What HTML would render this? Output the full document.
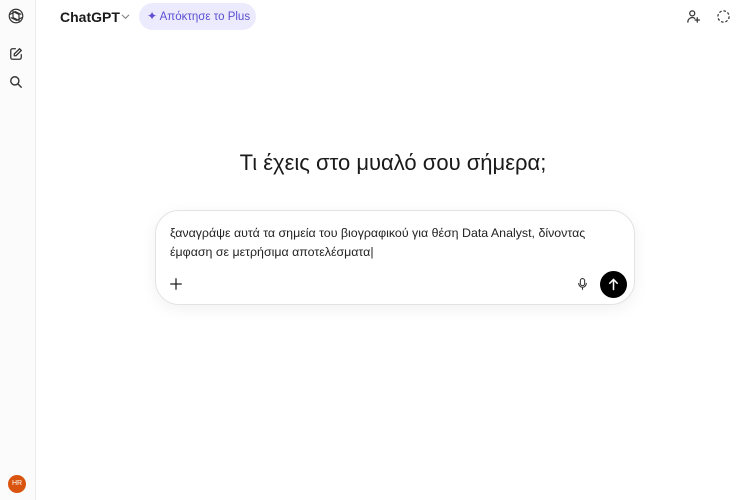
<!DOCTYPE html>
<html><head><meta charset="utf-8"><style>
*{margin:0;padding:0;box-sizing:border-box}
body{width:750px;height:500px;background:#fff;font-family:"Liberation Sans","DejaVu Sans",sans-serif;position:relative;overflow:hidden;color:#0d0d0d}
.side{position:absolute;left:0;top:0;width:36px;height:500px;background:#fbfbfb;border-right:1px solid #ececec}
.abs{position:absolute}
</style></head><body>
<div class="side">
<svg class="abs" style="left:7px;top:7px" width="18" height="18" viewBox="0 0 24 24" fill="none" stroke="#333" stroke-width="1.6"><circle cx="12" cy="12" r="9"/><path d="M8 5v9l6 3M16 19v-9l-6-3M4 10l7-4 8 4M20 14l-7 4-8-4"/></svg>
<svg class="abs" style="left:9px;top:47px" width="14" height="14" viewBox="0 0 24 24" fill="none" stroke="#333" stroke-width="2.2" stroke-linecap="round"><path d="M11 3H6a3 3 0 0 0-3 3v12a3 3 0 0 0 3 3h12a3 3 0 0 0 3-3v-5"/><path d="M18 3l3 3-9 9H9v-3z"/></svg>
<svg class="abs" style="left:9px;top:75px" width="14" height="14" viewBox="0 0 24 24" fill="none" stroke="#333" stroke-width="2.4" stroke-linecap="round"><circle cx="10" cy="10" r="7"/><path d="M15.5 15.5L21 21"/></svg>
<div class="abs" style="left:8px;top:475px;width:18px;height:18px;border-radius:50%;background:#d9540e;color:#fff;font-size:7px;line-height:18px;text-align:center">HR</div>
</div>
<div class="abs" style="left:60px;top:9px;font-size:14px;font-weight:bold;color:#1a1a1a">ChatGPT</div>
<svg class="abs" style="left:121px;top:13px" width="9" height="7" viewBox="0 0 10 7" fill="none" stroke="#888" stroke-width="1.2"><path d="M1 1.5l4 4 4-4"/></svg>
<div class="abs" style="left:139px;top:3px;width:117px;height:27px;border-radius:14px;background:#ecebfd;color:#5b4fd0;font-size:11.5px;line-height:27px;padding-left:8px"><span style="font-size:12px">&#10022;</span> Απόκτησε το Plus</div>
<svg class="abs" style="left:686px;top:9px" width="15" height="15" viewBox="0 0 24 24" fill="none" stroke="#333" stroke-width="2" stroke-linecap="round"><circle cx="10" cy="7" r="4"/><path d="M3 21a7 7 0 0 1 11-6M18 14v7M14.5 17.5h7"/></svg>
<svg class="abs" style="left:716px;top:9px" width="15" height="15" viewBox="0 0 24 24" fill="none" stroke="#333" stroke-width="2" stroke-dasharray="4 3"><circle cx="12" cy="12" r="9"/></svg>
<div class="abs" style="left:36px;width:714px;top:150px;text-align:center;font-size:22px;color:#1a1a1a">Τι έχεις στο μυαλό σου σήμερα;</div>
<div class="abs" style="left:155px;top:210px;width:480px;height:95px;border:1px solid #e3e3e3;border-radius:24px;box-shadow:0 4px 16px rgba(0,0,0,0.06);background:#fff"></div>
<div class="abs" style="left:170px;top:224px;width:460px;font-size:12.4px;line-height:19px;color:#222">ξαναγράψε αυτά τα σημεία του βιογραφικού για θέση Data Analyst, δίνοντας<br>έμφαση σε μετρήσιμα αποτελέσματα|</div>
<svg class="abs" style="left:169px;top:277px" width="14" height="14" viewBox="0 0 24 24" stroke="#222" stroke-width="2.2" stroke-linecap="round"><path d="M12 3v18M3 12h18"/></svg>
<svg class="abs" style="left:576px;top:277px" width="13" height="14" viewBox="0 0 24 24" fill="none" stroke="#333" stroke-width="2" stroke-linecap="round"><rect x="8" y="2" width="8" height="13" rx="4"/><path d="M5 11a7 7 0 0 0 14 0M12 18v4"/></svg>
<div class="abs" style="left:600px;top:271px;width:27px;height:27px;border-radius:50%;background:#000"></div>
<svg class="abs" style="left:606px;top:277px" width="15" height="15" viewBox="0 0 24 24" fill="none" stroke="#fff" stroke-width="2.5" stroke-linecap="round"><path d="M12 20V4M6 10l6-6 6 6"/></svg>
</body></html>
